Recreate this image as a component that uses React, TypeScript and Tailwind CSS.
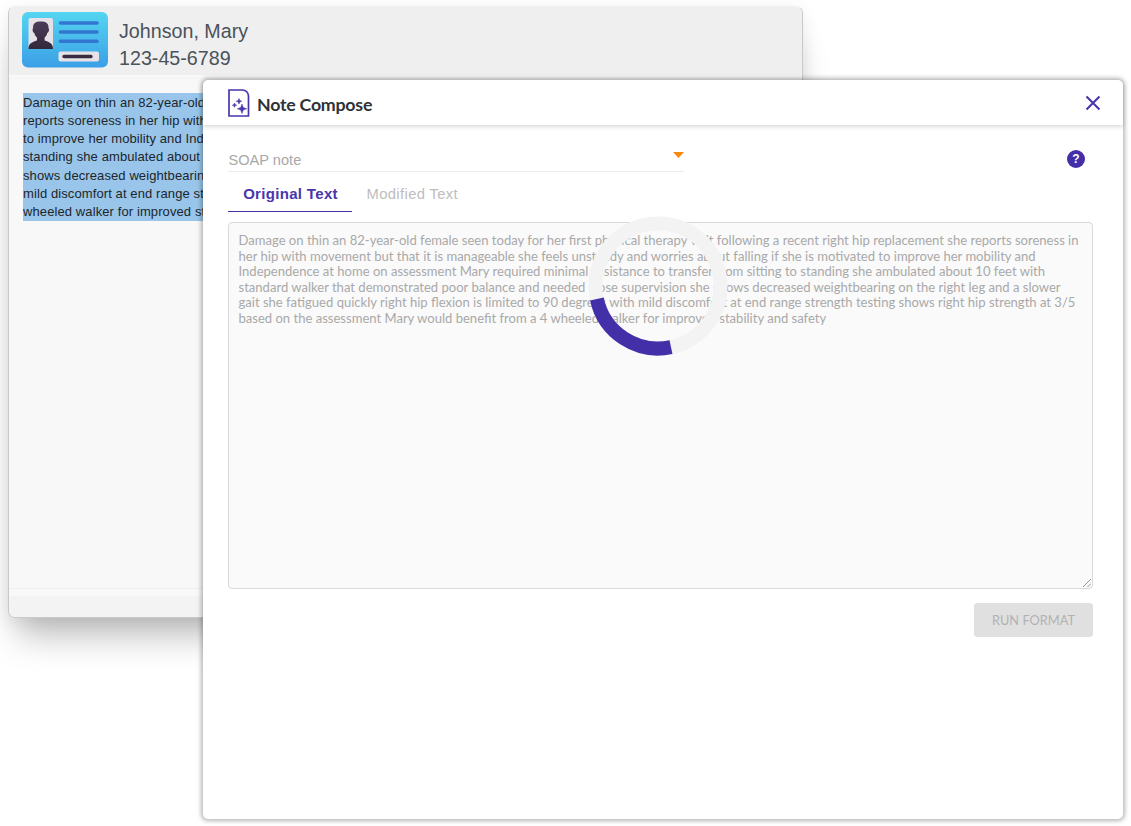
import type { ReactNode } from "react";

const chartLines = [
  "Damage on thin an 82-year-old",
  "reports soreness in her hip with",
  "to improve her mobility and Ind",
  "standing she ambulated about",
  "shows decreased weightbearin",
  "mild discomfort at end range st",
  "wheeled walker for improved st",
];

const noteLines = [
  "Damage on thin an 82-year-old female seen today for her first physical therapy visit following a recent right hip replacement she reports soreness in",
  "her hip with movement but that it is manageable she feels unsteady and worries about falling if she is motivated to improve her mobility and",
  "Independence at home on assessment Mary required minimal assistance to transfer from sitting to standing she ambulated about 10 feet with",
  "standard walker that demonstrated poor balance and needed close supervision she shows decreased weightbearing on the right leg and a slower",
  "gait she fatigued quickly right hip flexion is limited to 90 degrees with mild discomfort at end range strength testing shows right hip strength at 3/5",
  "based on the assessment Mary would benefit from a 4 wheeled walker for improved stability and safety",
];

function IdCard() {
  return (
    <svg width="86" height="56" viewBox="0 0 86 56" className="shrink-0">
      <defs>
        <linearGradient id="card" x1="0" y1="0" x2="0" y2="1">
          <stop offset="0" stopColor="#54d5f1" />
          <stop offset="1" stopColor="#3b9fe6" />
        </linearGradient>
        <linearGradient id="person" x1="0" y1="0" x2="0" y2="1">
          <stop offset="0" stopColor="#4c3b59" />
          <stop offset="1" stopColor="#32283a" />
        </linearGradient>
      </defs>
      <rect width="86" height="55.5" rx="6" fill="url(#card)" />
      <rect x="6.5" y="6" width="24.5" height="31" rx="2" fill="#e5e1e6" />
      <path
        d="M6.500 37c0-5.500 3.500-7 8.500-8.500v-3c-1.500-1.200-2.300-2.500-2.600-4.500-1.600-.5-2.500-4-1.300-4.800-.4-5 2.500-6.700 7.700-6.700s8.100 1.700 7.700 6.700c1.200.8.300 4.300-1.300 4.800-.3 2-1.100 3.300-2.600 4.500v3c5 1.500 8.400 3 8.400 8.500z"
        fill="url(#person)"
      />
      <g stroke="#3475d0" strokeWidth="3.6" strokeLinecap="round">
        <path d="M38.500 11h36.500M38.500 20h36.500M38.500 29.200h36.500" />
      </g>
      <rect x="36.5" y="39.5" width="40.5" height="10" rx="2" fill="#e6e2e6" />
      <path d="M42 44.500h27" stroke="#382c40" strokeWidth="3.3" strokeLinecap="round" />
    </svg>
  );
}

function ComposeIcon() {
  return (
    <svg width="22" height="28" viewBox="0 0 22 28" fill="none" className="shrink-0">
      <path d="M1 1h13.500a6 6 0 0 1 6 6v20H1z" stroke="#4a35ad" strokeWidth="1.7" />
      <path
        d="M14 15l1.200 3.500 3.500 1.300-3.500 1.300-1.200 3.500-1.300-3.500-3.400-1.300 3.400-1.300zM11 9.500l.8 2 2 .7-2 .8-.8 2-.8-2-2-.8 2-.7zM6.500 14l.6 1.600 1.600.6-1.600.6-.6 1.600-.6-1.600-1.600-.6 1.600-.6z"
        fill="#4a35ad"
        stroke="#4a35ad"
        strokeWidth=".5"
      />
    </svg>
  );
}

function Spinner() {
  return (
    <svg width="140" height="140" viewBox="0 0 140 140" fill="none">
      <circle cx="70" cy="70" r="62.5" stroke="#f3f3f3" strokeWidth="14" />
      <circle
        cx="70"
        cy="70"
        r="62.5"
        stroke="#4330a8"
        strokeWidth="14"
        pathLength="360"
        strokeDasharray="90 270"
        transform="rotate(78 70 70)"
      />
    </svg>
  );
}

function Line({ children }: { children: ReactNode }) {
  return <div className="whitespace-pre">{children}</div>;
}

function ChartWindow() {
  return (
    <div className="absolute left-[8px] top-[6px] flex h-[612px] w-[795px] flex-col overflow-hidden rounded-[7px] border border-[#c9c9c9] border-t-[#f0f0f0] bg-[#f8f8f8] shadow-[0_28px_32px_-10px_rgba(0,0,0,0.25),0_4px_18px_rgba(0,0,0,0.08)]">
      <div className="flex h-[68px] shrink-0 gap-[11px] bg-[#efefef] pl-[13px] pt-[5px]">
        <IdCard />
        <div className="pt-[6px] font-['Liberation_Sans'] text-[19.7px] leading-[27px] text-[#4a525a]">
          <div>Johnson, Mary</div>
          <div>123-45-6789</div>
        </div>
      </div>
      <div className="mt-[3px] flex-1 border-t border-[#f2f2f2] pl-[14px] pt-[14px]">
        <div className="bg-[#98c5e9] pt-[0.6px] font-['Liberation_Sans'] text-[13px] leading-[18.25px] tracking-[0.1px] text-[#20262c]">
          {chartLines.map((line) => (
            <Line key={line}>{line}</Line>
          ))}
        </div>
      </div>
      <div className="h-[8px] shrink-0 border-t border-[#efefef]" />
      <div className="h-[21px] shrink-0 bg-[#f3f3f3]" />
    </div>
  );
}

function ComposeDialog() {
  return (
    <div className="absolute left-[203px] top-[80px] flex h-[739px] w-[920px] flex-col rounded-[5px] bg-white shadow-[0_0_4px_2px_rgba(0,0,0,0.28)]">
      <header className="flex h-[45px] shrink-0 items-center rounded-t-[5px] pl-[25px] pr-[22px] shadow-[0_2px_4px_rgba(0,0,0,0.14)]">
        <ComposeIcon />
        <h1 className="ml-[7px] mt-[3px] font-[Lato] text-[17.8px] font-bold tracking-[-0.25px] text-[#2f3338]">
          Note Compose
        </h1>
        <svg width="16" height="16" viewBox="0 0 16 16" className="ml-auto">
          <path d="M1.500 1.500l13 13M14.500 1.500l-13 13" stroke="#4a35ad" strokeWidth="2.1" />
        </svg>
      </header>

      <div className="flex flex-1 flex-col pl-[25px] pr-[30px] font-['Liberation_Sans']">
        <div className="flex h-[47px] justify-between">
          <div className="flex w-[456px] justify-between border-b border-[#ececec] text-[14.6px] text-[#a8a8a8]">
            <span className="pl-[0.5px] pt-[25px]">SOAP note</span>
            <svg width="11" height="6" viewBox="0 0 11 6" className="mt-[27px]">
              <path d="M0 0h11L5.500 6z" fill="#f68a0c" />
            </svg>
          </div>
          <div className="mr-[8px] mt-[25px] flex size-[18px] items-center justify-center rounded-full bg-[#4330a8] text-[12px] font-bold text-white">
            ?
          </div>
        </div>

        <div className="flex h-[40px] shrink-0 text-[15px]">
          <div className="flex w-[124px] items-center justify-center border-b border-[#4330a8] pl-px pt-[5px] font-bold tracking-[0.32px] text-[#4a35ad]">
            Original Text
          </div>
          <div className="flex items-center pl-[14.5px] pt-[4px] text-[14.8px] tracking-[0.36px] text-[#bdbdbd]">
            Modified Text
          </div>
        </div>

        <div className="relative mt-[10px] h-[367px] shrink-0 rounded-[4px] border border-[#d8d8d8] bg-[#fafafa] pl-[9.5px] pt-[10px] font-[Lato] text-[13.06px] leading-[15.6px] text-[#a9a9a9]">
          {noteLines.map((line) => (
            <Line key={line}>{line}</Line>
          ))}
          <div className="absolute left-[359px] top-[-7px]">
            <Spinner />
          </div>
          <svg width="8" height="8" viewBox="0 0 8 8" className="absolute bottom-px right-px">
            <path d="M0 8L8 0M4.500 8L8 4.500" stroke="#8a8a8a" strokeWidth=".9" />
          </svg>
        </div>

        <div className="mt-[14px] flex h-[34px] w-[119px] items-center justify-center self-end rounded-[3px] bg-[#e0e0e0] pt-px font-[Lato] text-[12.8px] text-[#b2b2b2]">
          RUN FORMAT
        </div>
      </div>
    </div>
  );
}

export default function App() {
  return (
    <main className="relative h-[826px] w-[1131px] overflow-hidden bg-white">
      <ChartWindow />
      <ComposeDialog />
    </main>
  );
}
